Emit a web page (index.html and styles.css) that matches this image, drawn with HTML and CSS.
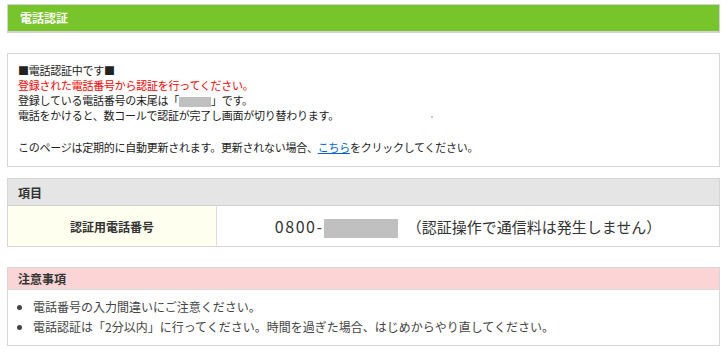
FILE: index.html
```html
<!DOCTYPE html>
<html>

<head>
  <meta charset="utf-8">
  <title>電話認証</title>
  <link rel="stylesheet" href="styles.css">
</head>

<body>
  <h1 class="title">電話認証</h1>

  <div class="status">
    ■電話認証中です■<br>
    <span class="warn">登録された電話番号から認証を行ってください。</span><br>
    登録している電話番号の末尾は「<span class="mask mask-small"></span>」です。<br>
    電話をかけると、数コールで認証が完了し画面が切り替わります。<span class="dot"></span><br>
    <span class="gap"></span>
    このページは定期的に自動更新されます。更新されない場合、<a href="#">こちら</a>をクリックしてください。
  </div>

  <table class="info">
    <tr>
      <th colspan="2">項目</th>
    </tr>
    <tr>
      <td class="label">認証用電話番号</td>
      <td class="value"><span class="num">0800-</span><span class="mask mask-big"></span>（認証操作で通信料は発生しません）</td>
    </tr>
  </table>

  <div class="notice">
    <div class="notice-head">注意事項</div>
    <ul>
      <li>電話番号の入力間違いにご注意ください。</li>
      <li>電話認証は「2分以内」に行ってください。時間を過ぎた場合、はじめからやり直してください。</li>
    </ul>
  </div>
</body>

</html>
```

FILE: styles.css
```css
body {
  margin: 0;
  padding: 4px 2px 8px 7px;
  font-family: "Noto Sans CJK JP", "Noto Sans", sans-serif;
  color: #333;
  background: #fff;
}

.title {
  margin: 0;
  height: 26px;
  line-height: 26px;
  padding-left: 12px;
  background-color: #78c42b;
  border: 1px solid #d2d2d2;
  border-bottom-width: 2px;
  color: #fff;
  font-size: 12px;
  font-weight: bold;
}

/* status message box */
.status {
  margin-top: 20px;
  padding: 9px 10px 11px 10px;
  border: 1px solid #d6d6d6;
  font-size: 11px;
  line-height: 15px;
  letter-spacing: -0.25px;
  color: #222;
}

.gap {
  display: block;
  height: 17px;
}

.warn {
  color: #ff0000;
}

.status a {
  color: #0066cc;
}

.mask {
  display: inline-block;
  background-color: #c0c0c0;
  vertical-align: middle;
}

.mask-small {
  width: 32px;
  height: 10px;
}

.mask-big {
  width: 74px;
  height: 19px;
  margin-right: 9px;
}

.dot {
  display: inline-block;
  width: 2px;
  height: 2px;
  margin-left: 92px;
  background-color: #c8c8c8;
  vertical-align: middle;
}

/* number table */
.info {
  width: 100%;
  margin-top: 11px;
  border-collapse: collapse;
  border: 1px solid #d6d6d6;
}

.info th {
  height: 26px;
  padding: 0 10px;
  text-align: left;
  background-color: #e5e5e5;
  border-bottom: 1px solid #d0d0d0;
  font-size: 12px;
}

.info td {
  height: 40px;
  padding: 0;
  text-align: center;
}

.label {
  width: 208px;
  background-color: #fffff0;
  border-right: 1px solid #dcdcdc;
  font-size: 12px;
  font-weight: bold;
}

.value {
  font-size: 15px;
  color: #333;
}

.num {
  font-size: 16px;
  letter-spacing: 1.6px;
}

/* notes */
.notice {
  margin-top: 20px;
  border: 1px solid #d6d6d6;
}

.notice-head {
  height: 21px;
  line-height: 21px;
  padding-left: 10px;
  background-color: #fbd5d5;
  border-bottom: 1px solid #dadada;
  font-size: 12px;
  font-weight: bold;
}

.notice ul {
  margin: 7px 0 8px 0;
  padding-left: 25px;
  font-size: 12px;
  line-height: 20px;
  color: #444;
}
```
